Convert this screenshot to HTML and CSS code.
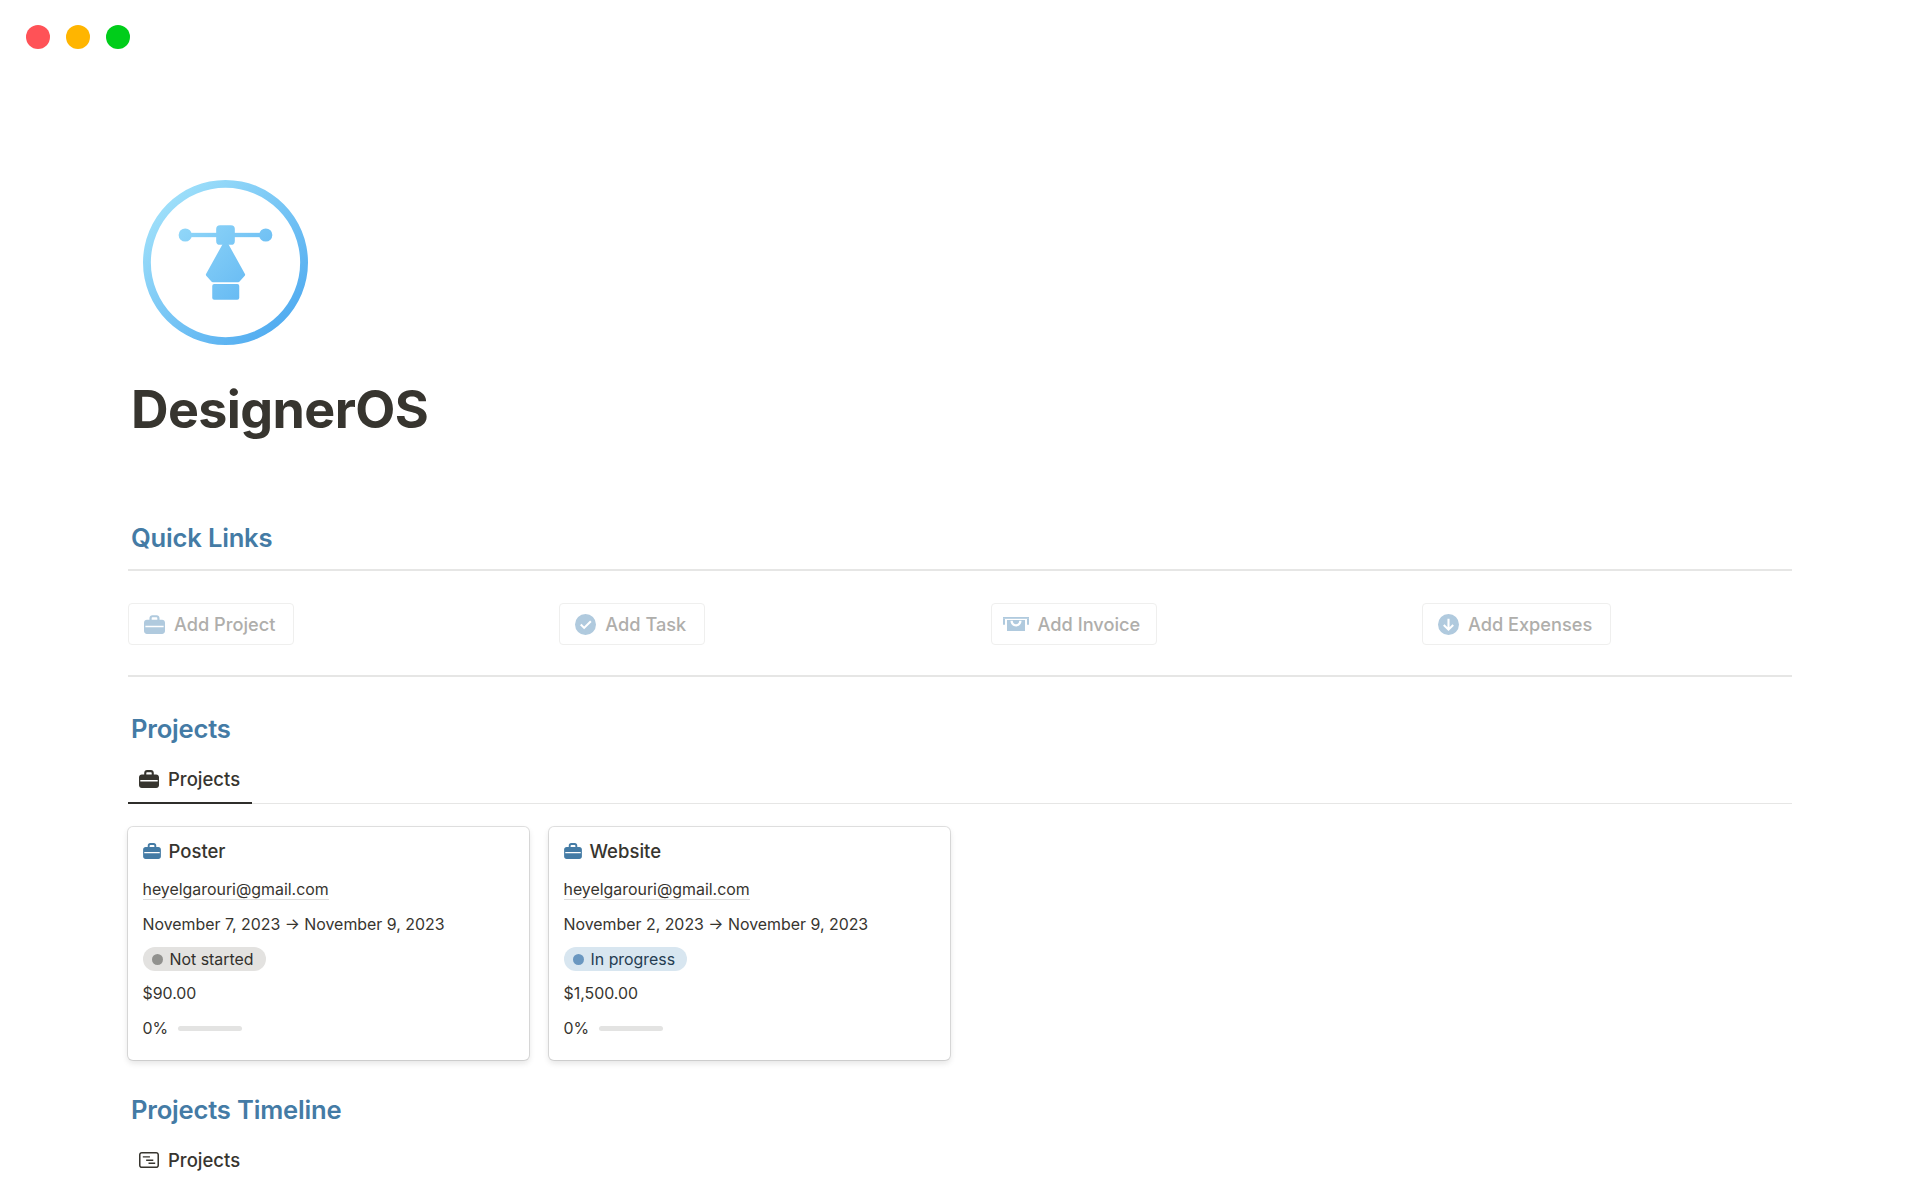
FILE: index.html
```html
<!DOCTYPE html>
<html lang="en">
<head>
<meta charset="utf-8">
<title>DesignerOS</title>
<link rel="stylesheet" href="styles.css">
</head>
<body>
<svg class="defs" width="0" height="0" aria-hidden="true">
  <defs>
    <linearGradient id="logoGrad" gradientUnits="userSpaceOnUse" x1="20" y1="20" x2="148" y2="148">
      <stop offset="0" stop-color="#9fe0fa"/>
      <stop offset="1" stop-color="#50abf0"/>
    </linearGradient>
    <symbol id="case" viewBox="0 0 20 18">
      <path d="M5.200 5.500V3C5.200 1.300 6.400.1 8 .1h4C13.600.1 14.800 1.300 14.800 3v2.500h-2.100V3.200c0-.6-.4-1-1-1H8.300c-.6 0-1 .4-1 1v2.300z"/>
      <path fill-rule="evenodd" d="M2.800 4.500h14.400C18.800 4.500 20 5.700 20 7.300v7.900c0 1.600-1.200 2.800-2.800 2.800H2.800C1.200 18 0 16.800 0 15.200V7.300C0 5.700 1.200 4.500 2.800 4.500zM1.300 10.100v1.400h17.400v-1.400z"/>
    </symbol>
  </defs>
</svg>
<div class="lights">
  <span class="light red"></span>
  <span class="light amber"></span>
  <span class="light green"></span>
</div>
<main class="page">
  <svg class="logo" viewBox="0 0 168 168">
    <g fill="url(#logoGrad)" stroke="none">
      <path fill-rule="evenodd" d="M84 0a84 84 0 1 0 0 168a84 84 0 1 0 0-168zM84 8a76 76 0 1 1 0 152a76 76 0 1 1 0-152z"/>
      <circle cx="43" cy="56" r="6.700"/>
      <circle cx="125" cy="56" r="6.700"/>
      <rect x="43" y="53.800" width="82" height="4.400"/>
      <rect x="74.500" y="46" width="19" height="20" rx="4"/>
      <path d="M84 63L102.500 96.500L97 102.500H71L65.500 96.500Z" stroke="url(#logoGrad)" stroke-linejoin="round" stroke-width="3"/>
      <rect x="70.500" y="106" width="27.500" height="16" rx="2"/>
    </g>
  </svg>
  <h1 class="title">DesignerOS</h1>

  <h2 class="heading heading-first">Quick Links</h2>
  <hr class="rule">
  <div class="quick">
    <div class="quick-col">
      <a class="btn">
        <svg class="btn-icon case-icon"><use href="#case"/></svg>
        <span>Add Project</span>
      </a>
    </div>
    <div class="quick-col">
      <a class="btn">
        <svg class="btn-icon" viewBox="0 0 20 20"><path fill-rule="evenodd" d="M10 0a10 10 0 1 0 0 20a10 10 0 1 0 0-20zM14.400 6.300l1.400 1.300-7.100 7-3.900-3.800 1.400-1.400 2.500 2.400z"/></svg>
        <span>Add Task</span>
      </a>
    </div>
    <div class="quick-col">
      <a class="btn btn-invoice">
        <svg class="btn-icon wide" viewBox="0 0 26 14"><path d="M0 0h26v1.800H0z"/><path d="M0 1.800h2v6H0zM24 1.800h2v6h-2z"/><path fill-rule="evenodd" d="M4 3h18v11H4zM7.500 3.800c0 3.200 2.300 5.700 5.500 5.700s5.500-2.500 5.500-5.700h-2.300c0 2-1.300 3.500-3.200 3.500s-3.200-1.500-3.200-3.500z"/></svg>
        <span>Add Invoice</span>
      </a>
    </div>
    <div class="quick-col">
      <a class="btn">
        <svg class="btn-icon" viewBox="0 0 20 20"><path fill-rule="evenodd" d="M10 0a10 10 0 1 0 0 20a10 10 0 1 0 0-20zM9 4.500h2v8l2.800-2.800 1.400 1.400L10 16.300 4.800 11.100l1.400-1.400L9 12.500z"/></svg>
        <span>Add Expenses</span>
      </a>
    </div>
  </div>
  <hr class="rule">

  <h2 class="heading heading-projects">Projects</h2>
  <div class="tabs">
    <div class="tab active">
      <svg class="tab-icon case-icon"><use href="#case"/></svg>
      <span>Projects</span>
    </div>
  </div>
  <div class="cards">
    <article class="card">
      <div class="card-title">
        <svg class="card-icon case-icon"><use href="#case"/></svg>
        <span>Poster</span>
      </div>
      <div class="row"><span class="email">heyelgarouri@gmail.com</span></div>
      <div class="row">November 7, 2023 → November 9, 2023</div>
      <div class="row"><span class="pill pill-grey"><i class="pill-dot"></i>Not started</span></div>
      <div class="row">$90.00</div>
      <div class="row progress"><span>0%</span><span class="bar"></span></div>
    </article>
    <article class="card">
      <div class="card-title">
        <svg class="card-icon case-icon"><use href="#case"/></svg>
        <span>Website</span>
      </div>
      <div class="row"><span class="email">heyelgarouri@gmail.com</span></div>
      <div class="row">November 2, 2023 → November 9, 2023</div>
      <div class="row"><span class="pill pill-blue"><i class="pill-dot"></i>In progress</span></div>
      <div class="row">$1,500.00</div>
      <div class="row progress"><span>0%</span><span class="bar"></span></div>
    </article>
  </div>

  <h2 class="heading heading-timeline">Projects Timeline</h2>
  <div class="tab plain">
    <svg class="tab-icon" viewBox="0 0 21 17"><path fill-rule="evenodd" d="M3 0h15c1.700 0 3 1.300 3 3v11c0 1.700-1.300 3-3 3H3c-1.700 0-3-1.300-3-3V3c0-1.700 1.300-3 3-3zM3 1.600c-.8 0-1.400.6-1.400 1.400v11c0 .8.600 1.400 1.400 1.400h15c.8 0 1.400-.6 1.400-1.400V3c0-.8-.6-1.400-1.400-1.400z"/><path d="M4 4.500h7.500v1.500H4zM7.500 8h7.500v1.500H7.500zM10 11.200h7v1.500h-7z"/></svg>
    <span>Projects</span>
  </div>
</main>
</body>
</html>
```
FILE: styles.css
```css
* { box-sizing: border-box; }
html, body { margin: 0; padding: 0; background: #fff; }
body {
  width: 1920px;
  height: 1200px;
  overflow: hidden;
  font-family: Inter, "Liberation Sans", sans-serif;
  color: #37352f;
}
.defs { position: absolute; }
.lights { display: flex; gap: 16px; padding: 25px 0 0 26px; }
.light { width: 24px; height: 24px; border-radius: 50%; }
.red { background: #ff5257; }
.amber { background: #ffb500; }
.green { background: #00cd1a; }

.page { padding: 131px 128px 0 128px; }
.logo { display: block; width: 165px; height: 165px; margin-left: 15px; }
.title {
  margin: 34px 0 0 3px;
  font-size: 52px;
  line-height: 62px;
  font-weight: 700;
  color: #37352f;
  letter-spacing: -0.6px;
}
.heading {
  margin: 0 0 0 3px;
  font-size: 25.6px;
  line-height: 32px;
  font-weight: 600;
  color: #447ba5;
  letter-spacing: -0.2px;
}
.heading-first { margin-top: 81px; }
.heading-projects { margin-top: 36px; }
.heading-timeline { margin-top: 34px; }
.rule { margin: 0; border: 0; height: 2px; background: #e6e6e5; }
.heading-first + .rule { margin-top: 15px; }

.quick {
  display: grid;
  grid-template-columns: repeat(4, 370px);
  column-gap: 61.300px;
  padding: 32px 0 30px;
}
.btn {
  display: inline-flex;
  align-items: center;
  gap: 9px;
  height: 42px;
  padding: 0 18px 0 15px;
  border: 1px solid #efefee;
  border-radius: 4px;
  font-size: 18.200px;
  font-weight: 500;
  color: #afaeab;
}
.btn-invoice { padding-left: 11px; padding-right: 16px; }
.btn-icon { width: 21px; height: 21px; fill: #b0cade; flex: none; }
.btn-icon.case-icon { height: 19px; }
.btn-icon.wide { width: 26px; height: 14px; }

.tabs { border-bottom: 1px solid #e6e6e5; height: 47px; margin-top: 12px; }
.tab {
  display: flex;
  align-items: center;
  gap: 9px;
  height: 47px;
  padding: 0 11px 2px;
  font-size: 18.500px;
  font-weight: 500;
  color: #37352f;
}
.tab.active { width: 124px; border-bottom: 2px solid #2f2e2b; }
.tab.plain { height: 36px; margin-top: 16px; padding-bottom: 0; }
.tab-icon { width: 20px; height: 18px; fill: #37352f; flex: none; }

.cards { display: flex; gap: 20px; margin-top: 23px; }
.card {
  display: flex;
  flex-direction: column;
  width: 401px;
  height: 233px;
  padding: 11px 15px 11px 14.500px;
  border-radius: 5px;
  background: #fff;
  box-shadow: 0 0 0 1px rgba(15, 15, 15, .12), 0 3px 6px rgba(15, 15, 15, .12);
}
.card-title {
  display: flex;
  align-items: center;
  gap: 8px;
  height: 26px;
  margin-bottom: 9px;
  font-size: 18.500px;
  font-weight: 500;
  color: #37352f;
}
.card-icon { width: 18px; height: 16px; fill: #447ba5; flex: none; }
.row {
  display: flex;
  align-items: center;
  height: 34.500px;
  font-size: 15.900px;
  color: #37352f;
}
.email { border-bottom: 1px solid #dededd; line-height: 19px; }
.pill {
  display: inline-flex;
  align-items: center;
  gap: 7px;
  height: 24px;
  padding: 0 12px 0 9px;
  border-radius: 12px;
}
.pill-dot { width: 11px; height: 11px; border-radius: 50%; }
.pill-grey { background: #e3e2e0; color: #32302c; }
.pill-grey .pill-dot { background: #91918e; }
.pill-blue { background: #d8e6f0; color: #253d52; }
.pill-blue .pill-dot { background: #6a97c0; }
.progress { gap: 10px; }
.bar { width: 64px; height: 5px; border-radius: 3px; background: #e3e3e2; }
```
